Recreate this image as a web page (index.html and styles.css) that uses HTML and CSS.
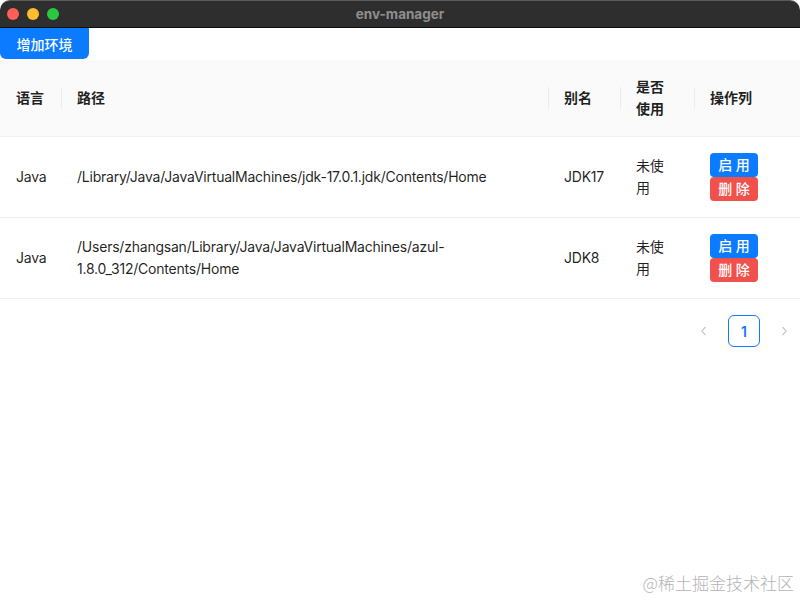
FILE: index.html
```html
<!DOCTYPE html>
<html lang="zh">
	<head>
		<title>env-manager</title>
		<meta charset="UTF-8">
		<link rel="stylesheet" href="styles.css">
	</head>
	<body>
		<div class="titleBar">
			<div class="lights">
				<span class="light red"></span>
				<span class="light yellow"></span>
				<span class="light green"></span>
			</div>
			<div class="titleText">env-manager</div>
		</div>

		<div class="toolBar">
			<button class="btnAdd">增加环境</button>
		</div>

		<table class="envTable">
			<colgroup>
				<col class="colLang">
				<col class="colPath">
				<col class="colAlias">
				<col class="colUsed">
				<col class="colOps">
			</colgroup>
			<thead>
				<tr>
					<th>语言</th>
					<th class="sep">路径</th>
					<th class="sep">别名</th>
					<th class="sep">是否使用</th>
					<th class="sep">操作列</th>
				</tr>
			</thead>
			<tbody>
				<tr>
					<td>Java</td>
					<td>/Library/Java/JavaVirtualMachines/jdk-17.0.1.jdk/Contents/Home</td>
					<td>JDK17</td>
					<td>未使用</td>
					<td>
						<button class="btnSmall btnOn">启 用</button>
						<button class="btnSmall btnDel">删 除</button>
					</td>
				</tr>
				<tr>
					<td>Java</td>
					<td>/Users/zhangsan/Library/Java/JavaVirtualMachines/azul-1.8.0_312/Contents/Home</td>
					<td>JDK8</td>
					<td>未使用</td>
					<td>
						<button class="btnSmall btnOn">启 用</button>
						<button class="btnSmall btnDel">删 除</button>
					</td>
				</tr>
			</tbody>
		</table>

		<div class="pager">
			<span class="pageArrow">
				<svg width="10" height="10" viewBox="0 0 10 10"><path d="M6.5 1 L2.8 5 L6.5 9" fill="none" stroke="#c8c8c8" stroke-width="1.2"/></svg>
			</span>
			<span class="pageItem">1</span>
			<span class="pageArrow">
				<svg width="10" height="10" viewBox="0 0 10 10"><path d="M3.5 1 L7.2 5 L3.5 9" fill="none" stroke="#c8c8c8" stroke-width="1.2"/></svg>
			</span>
		</div>

		<div class="watermark">@稀土掘金技术社区</div>
	</body>
</html>
```

FILE: styles.css
```css
body {
	margin : 0;
	background-color : white;
	font-family : Inter, "Noto Sans CJK SC", sans-serif;
	font-size : 14px;
	color : rgba(0, 0, 0, 0.88);
	height : 600px;
	overflow : hidden;
	position : relative;
}

.titleBar {
	height : 28px;
	background-color : #2e2e2e;
	border-top : 1px solid #5a5a5a;
	border-bottom : 1px solid #0c0c0c;
	border-radius : 10px 10px 0 0;
	box-sizing : border-box;
	display : flex;
	align-items : center;
	position : relative;
}
.lights {
	display : flex;
	gap : 8px;
	padding-left : 7px;
}
.light {
	width : 12px;
	height : 12px;
	border-radius : 50%;
	display : inline-block;
}
.red { background-color : #fe5f57; }
.yellow { background-color : #febc2e; }
.green { background-color : #29c840; }
.titleText {
	position : absolute;
	left : 0;
	right : 0;
	text-align : center;
	color : #8f8f8f;
	font-weight : 700;
	font-size : 13.5px;
	font-family : Inter, sans-serif;
	pointer-events : none;
}

.toolBar {
	height : 32px;
}
.btnAdd {
	background-color : #0b7bff;
	color : white;
	border : none;
	height : 31px;
	width : 89px;
	padding : 0;
	font-size : 14px;
	font-weight : 500;
	font-family : Inter, "Noto Sans CJK SC", sans-serif;
	border-radius : 0 0 6px 6px;
	display : block;
}

.envTable {
	width : 800px;
	border-collapse : collapse;
	table-layout : fixed;
}
.colLang { width : 61px; }
.colPath { width : 487px; }
.colAlias { width : 72px; }
.colUsed { width : 74px; }
.colOps { width : 106px; }

.envTable th {
	background-color : #fafafa;
	text-align : left;
	font-weight : 600;
	padding : 16px;
	line-height : 22px;
	border-bottom : 1px solid #f0f0f0;
	position : relative;
}
.envTable th.sep::before {
	content : "";
	position : absolute;
	left : 0;
	top : 50%;
	width : 1px;
	height : 22px;
	margin-top : -11px;
	background-color : #ececec;
}
.envTable td {
	padding : 16px;
	line-height : 22px;
	letter-spacing : -0.22px;
	border-bottom : 1px solid #f0f0f0;
	vertical-align : middle;
}
.envTable th:nth-child(4),
.envTable td:nth-child(4) {
	padding-right : 30px;
}

.btnSmall {
	display : block;
	width : 48px;
	height : 24px;
	padding : 0;
	margin : 0;
	border : none;
	border-radius : 4px;
	color : white;
	font-size : 14px;
	font-weight : 500;
	line-height : 24px;
	font-family : Inter, "Noto Sans CJK SC", sans-serif;
}
.btnOn {
	background-color : #0b7bff;
}
.btnDel {
	background-color : #f0514c;
}

.pager {
	display : flex;
	justify-content : flex-end;
	align-items : center;
	gap : 8px;
	margin-top : 16px;
}
.pageArrow {
	width : 32px;
	height : 32px;
	display : flex;
	align-items : center;
	justify-content : center;
}
.pageItem {
	width : 30px;
	height : 30px;
	border : 1px solid #1677ff;
	border-radius : 6px;
	color : #1677ff;
	font-weight : 600;
	display : flex;
	align-items : center;
	justify-content : center;
}

.watermark {
	position : absolute;
	right : 6px;
	bottom : 5px;
	color : #b4b4b4;
	font-size : 17px;
	font-family : "Noto Sans CJK SC", sans-serif;
	font-weight : 300;
}
```
